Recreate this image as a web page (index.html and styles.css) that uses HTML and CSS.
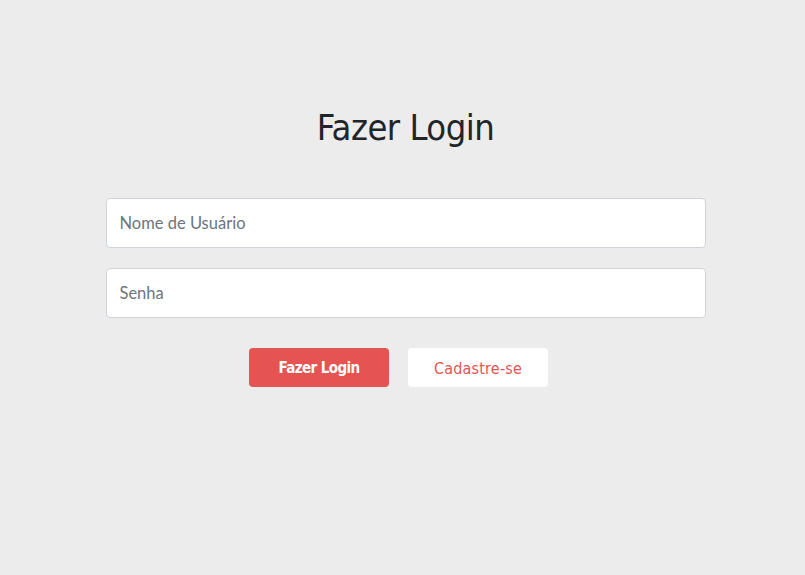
FILE: index.html
```html
<!DOCTYPE html>
<html lang="pt-BR">
<head>
<meta charset="utf-8">
<title>Fazer Login</title>
<link rel="stylesheet" href="styles.css">
</head>
<body>
<main class="page">
  <h1 class="title">Fazer Login</h1>
  <form class="form">
    <input class="field" type="text" placeholder="Nome de Usuário">
    <input class="field" type="password" placeholder="Senha">
    <div class="actions">
      <button type="button" class="btn btn-primary">Fazer Login</button>
      <button type="button" class="btn btn-secondary">Cadastre-se</button>
    </div>
  </form>
</main>
</body>
</html>
```

FILE: styles.css
```css
html, body {
  margin: 0;
  padding: 0;
  background: #ececec;
}
body {
  padding-left: 6px;
}
.page {
  width: 600px;
  margin: 0 auto;
  padding-top: 104px;
  display: flex;
  flex-direction: column;
  align-items: center;
}
.title {
  margin: 0;
  font-family: "DejaVu Sans Condensed", "DejaVu Sans", sans-serif;
  font-weight: normal;
  font-size: 36px;
  line-height: 48px;
  color: #212529;
  letter-spacing: -0.5px;
}
.form {
  margin-top: 46px;
  width: 600px;
  display: flex;
  flex-direction: column;
  gap: 20px;
}
.field {
  box-sizing: border-box;
  width: 100%;
  height: 50px;
  padding: 0 13px;
  border: 1px solid #ced4da;
  border-radius: 4px;
  background: #fff;
  font-family: "Lato", sans-serif;
  font-size: 16.5px;
  color: #495057;
  outline: none;
}
.field::placeholder {
  color: #6c757d;
}
.actions {
  display: flex;
  justify-content: center;
  gap: 19px;
  margin-top: 10px;
  padding-right: 14px;
}
.btn {
  width: 140px;
  height: 39px;
  padding: 1px 0 0;
  border: none;
  border-radius: 4px;
  font-family: "DejaVu Sans Condensed", "DejaVu Sans", sans-serif;
  font-size: 16px;
  cursor: pointer;
}
.btn-primary {
  background: #e55353;
  color: #fff;
  font-weight: bold;
  font-size: 15px;
  letter-spacing: -0.6px;
}
.btn-secondary {
  background: #fff;
  color: #e55353;
  letter-spacing: 0.2px;
}
```
